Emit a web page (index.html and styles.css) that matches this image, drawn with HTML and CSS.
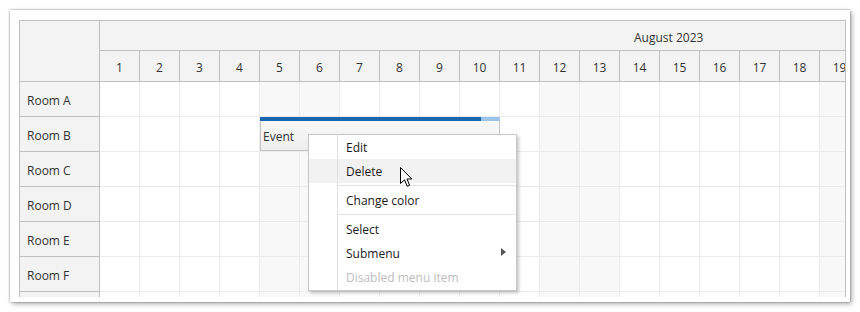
FILE: index.html
```html
<!DOCTYPE html>
<html>
<head>
<meta charset="utf-8">
<link rel="stylesheet" href="styles.css">
</head>
<body>
<div class="card">
  <div class="scheduler">
    <div class="grid">
      <div class="corner"></div>
      <div class="month">August 2023</div>
      <div class="day">1</div><div class="day">2</div><div class="day">3</div><div class="day">4</div><div class="day">5</div><div class="day">6</div><div class="day">7</div><div class="day">8</div><div class="day">9</div><div class="day">10</div><div class="day">11</div><div class="day">12</div><div class="day">13</div><div class="day">14</div><div class="day">15</div><div class="day">16</div><div class="day">17</div><div class="day">18</div><div class="day">19</div>

      <div class="rh">Room A</div>
      <div class="c"></div><div class="c"></div><div class="c"></div><div class="c"></div><div class="c w"></div><div class="c w"></div><div class="c"></div><div class="c"></div><div class="c"></div><div class="c"></div><div class="c"></div><div class="c w"></div><div class="c w"></div><div class="c"></div><div class="c"></div><div class="c"></div><div class="c"></div><div class="c"></div><div class="c w"></div>

      <div class="rh">Room B</div>
      <div class="c"></div><div class="c"></div><div class="c"></div><div class="c"></div><div class="c w"></div><div class="c w"></div><div class="c"></div><div class="c"></div><div class="c"></div><div class="c"></div><div class="c"></div><div class="c w"></div><div class="c w"></div><div class="c"></div><div class="c"></div><div class="c"></div><div class="c"></div><div class="c"></div><div class="c w"></div>

      <div class="rh">Room C</div>
      <div class="c"></div><div class="c"></div><div class="c"></div><div class="c"></div><div class="c w"></div><div class="c w"></div><div class="c"></div><div class="c"></div><div class="c"></div><div class="c"></div><div class="c"></div><div class="c w"></div><div class="c w"></div><div class="c"></div><div class="c"></div><div class="c"></div><div class="c"></div><div class="c"></div><div class="c w"></div>

      <div class="rh">Room D</div>
      <div class="c"></div><div class="c"></div><div class="c"></div><div class="c"></div><div class="c w"></div><div class="c w"></div><div class="c"></div><div class="c"></div><div class="c"></div><div class="c"></div><div class="c"></div><div class="c w"></div><div class="c w"></div><div class="c"></div><div class="c"></div><div class="c"></div><div class="c"></div><div class="c"></div><div class="c w"></div>

      <div class="rh">Room E</div>
      <div class="c"></div><div class="c"></div><div class="c"></div><div class="c"></div><div class="c w"></div><div class="c w"></div><div class="c"></div><div class="c"></div><div class="c"></div><div class="c"></div><div class="c"></div><div class="c w"></div><div class="c w"></div><div class="c"></div><div class="c"></div><div class="c"></div><div class="c"></div><div class="c"></div><div class="c w"></div>

      <div class="rh">Room F</div>
      <div class="c"></div><div class="c"></div><div class="c"></div><div class="c"></div><div class="c w"></div><div class="c w"></div><div class="c"></div><div class="c"></div><div class="c"></div><div class="c"></div><div class="c"></div><div class="c w"></div><div class="c w"></div><div class="c"></div><div class="c"></div><div class="c"></div><div class="c"></div><div class="c"></div><div class="c w"></div>

      <div class="rh"></div>
      <div class="c"></div><div class="c"></div><div class="c"></div><div class="c"></div><div class="c w"></div><div class="c w"></div><div class="c"></div><div class="c"></div><div class="c"></div><div class="c"></div><div class="c"></div><div class="c w"></div><div class="c w"></div><div class="c"></div><div class="c"></div><div class="c"></div><div class="c"></div><div class="c"></div><div class="c w"></div>
    </div>

    <div class="event">
      <div class="bar"><div class="bar-done" style="width:221px"></div></div>
      <div class="event-text">Event</div>
    </div>
  </div>
</div>

<div class="menu">
  <div class="item">Edit</div>
  <div class="item hover">Delete</div>
  <div class="sep"></div>
  <div class="item">Change color</div>
  <div class="sep"></div>
  <div class="item">Select</div>
  <div class="item sub">Submenu</div>
  <div class="item disabled">Disabled menu item</div>
</div>

<svg class="cursor" width="13" height="21" viewBox="0 0 13 21">
  <path d="M0.5 0.5 L0.5 16.5 L4.5 12.8 L7.2 19.3 L9.6 18.3 L7 12 L11.8 12 Z" fill="#fff" stroke="#000" stroke-width="1" stroke-linejoin="miter"/>
</svg>
</body>
</html>
```

FILE: styles.css
```css
html, body {
  margin: 0;
  padding: 0;
  background: #fff;
}

body {
  font-family: "Open Sans", "Noto Sans", sans-serif;
  font-size: 12px;
  color: #333;
  position: relative;
  width: 860px;
  height: 312px;
  overflow: hidden;
}

.card {
  margin: 10px 0 0 10px;
  width: 840px;
  height: 292px;
  box-sizing: border-box;
  padding: 10px 4px 5px 9px;
  background: #fff;
  box-shadow: 0 0 2px rgba(0, 0, 0, 0.45), 2px 2px 5px rgba(0, 0, 0, 0.3);
}

.scheduler {
  position: relative;
  width: 827px;
  height: 277px;
  box-sizing: border-box;
  border: 1px solid #c0c0c0;
  border-bottom: none;
  overflow: hidden;
}

.grid {
  display: grid;
  grid-template-columns: 80px repeat(19, 40px);
  grid-template-rows: 30px 31px repeat(7, 35px);
  width: max-content;
}

.grid > div {
  box-sizing: border-box;
}

.corner {
  grid-row: 1 / 3;
  background: #f3f3f3;
  border-right: 1px solid #c0c0c0;
  border-bottom: 1px solid #c0c0c0;
}

.month {
  grid-column: 2 / 21;
  background: #f3f3f3;
  border-bottom: 1px solid #c0c0c0;
  display: flex;
  align-items: center;
  padding-left: 534px;
  padding-top: 4px;
}

.day {
  background: #f3f3f3;
  border-right: 1px solid #c0c0c0;
  border-bottom: 1px solid #c0c0c0;
  display: flex;
  align-items: center;
  justify-content: center;
  padding-top: 2px;
}

.rh {
  background: #f3f3f3;
  border-right: 1px solid #c0c0c0;
  border-bottom: 1px solid #c0c0c0;
  display: flex;
  align-items: center;
  padding-left: 7px;
  padding-top: 2px;
}

.c {
  background: #fff;
  border-right: 1px solid #ebebeb;
  border-bottom: 1px solid #ebebeb;
}

.c.w {
  background: #f8f8f8;
}

.event {
  position: absolute;
  left: 240px;
  top: 96px;
  width: 240px;
  height: 34px;
  box-sizing: border-box;
  border: 1px solid #c4c4c4;
  border-top: none;
  background: linear-gradient(#fafafa, #eeeeee);
  display: flex;
  flex-direction: column;
}

.bar {
  height: 4px;
  margin: 0 -1px;
  background: #9cc4e8;
}

.bar-done {
  height: 4px;
  background: #1a66ac;
}

.event-text {
  flex: 1;
  display: flex;
  align-items: center;
  padding-left: 2px;
  padding-top: 1px;
  color: #333;
}

.menu {
  position: absolute;
  left: 308px;
  top: 134px;
  width: 209px;
  box-sizing: border-box;
  border: 1px solid #c8c8c8;
  background: #fff;
  box-shadow: 2px 2px 3px rgba(0, 0, 0, 0.22);
  padding-bottom: 1px;
  color: #1a1a1a;
}

.menu::before {
  content: "";
  position: absolute;
  left: 28px;
  top: 0;
  bottom: 0;
  width: 1px;
  background: #e2e2e2;
  z-index: 1;
}

.item {
  position: relative;
  height: 24px;
  line-height: 26px;
  padding-left: 37px;
  overflow: hidden;
}

.item.hover {
  background: #f2f2f2;
}

.item.disabled {
  color: #bdbdbd;
}

.item.sub::after {
  content: "";
  position: absolute;
  right: 10px;
  top: 7px;
  border-left: 5px solid #555;
  border-top: 4.5px solid transparent;
  border-bottom: 4.5px solid transparent;
}

.sep {
  margin: 2px 0 2px 29px;
  border-top: 1px solid #e2e2e2;
}

.cursor {
  position: absolute;
  left: 400px;
  top: 167px;
}
```
